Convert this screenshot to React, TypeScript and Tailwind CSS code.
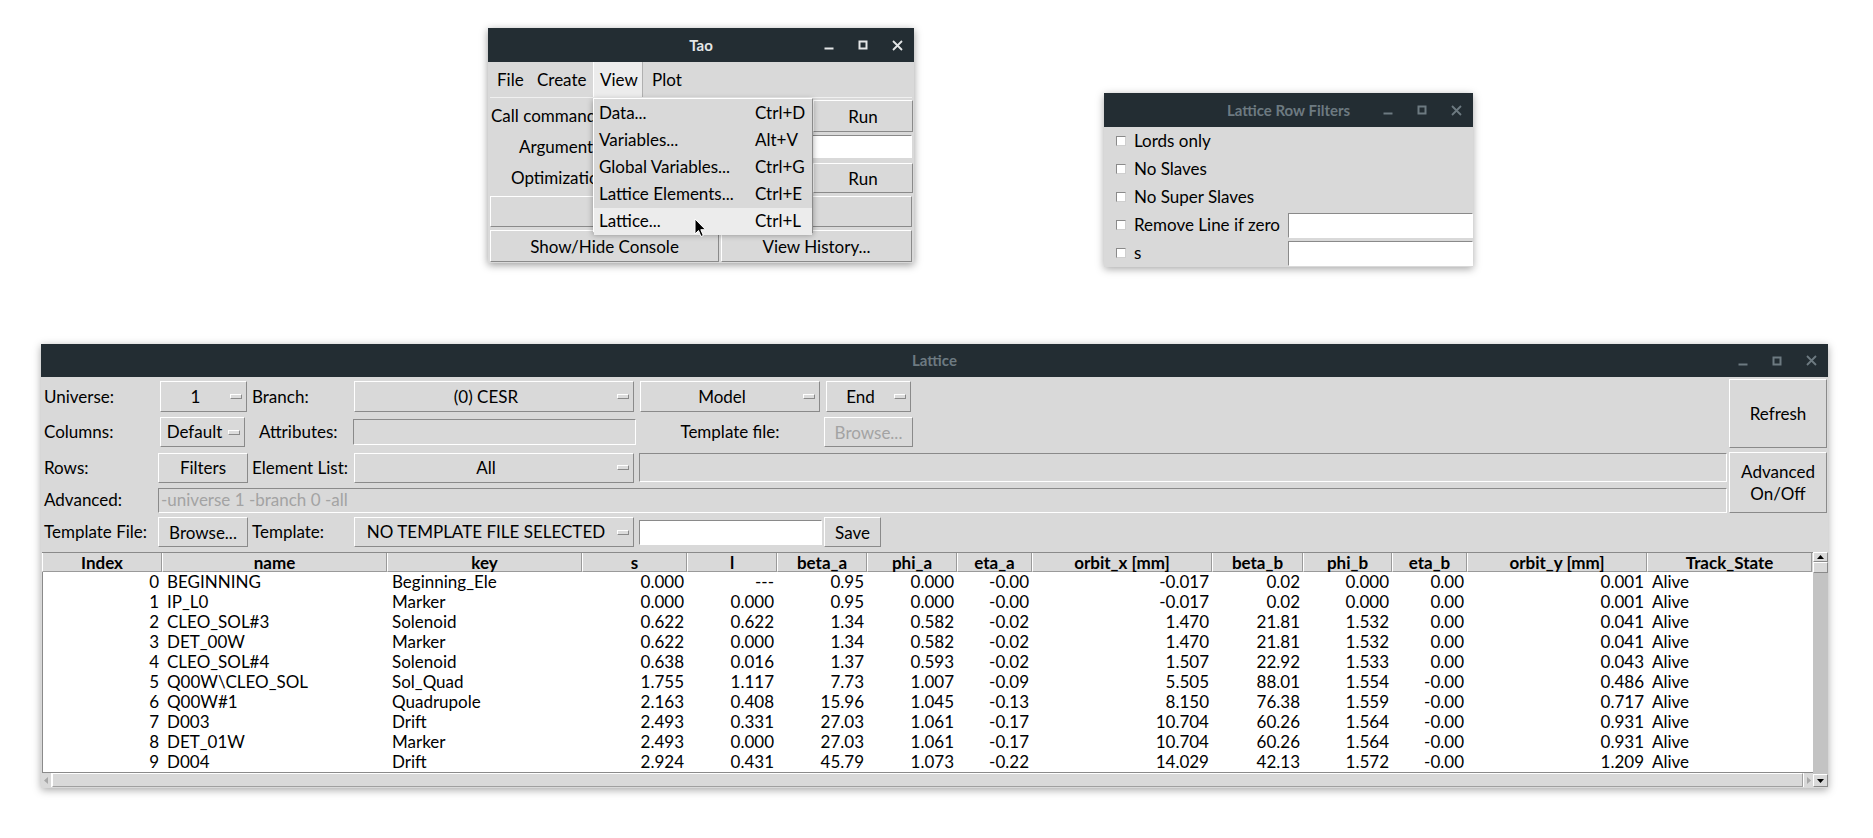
import React from "react";

const RAISED = "border border-t-white border-l-white border-b-[#8a8a8a] border-r-[#8a8a8a]";
const SUNKEN = "border border-t-[#8a8a8a] border-l-[#8a8a8a] border-b-white border-r-white";

function TitleBar({ title, active, tall }: { title: string; active?: boolean; tall?: boolean }) {
  const tone = active ? "text-[#e4e6e7]" : "text-[#6d7a81]";
  return (
    <div className={`relative flex shrink-0 items-center justify-center bg-[#232d33] ${tall ? "h-[34px]" : "h-[33px]"}`}>
      <span className={`text-[15px] font-bold ${tone}`}>{title}</span>
      <div className={`absolute right-0 top-0 flex h-full items-center ${tone}`}>
        <div className="flex w-[34px] justify-center">
          <svg width="10" height="10" viewBox="0 0 10 10">
            <rect x="0.5" y="7.5" width="9" height="2" fill="currentColor" />
          </svg>
        </div>
        <div className="flex w-[34px] justify-center">
          <svg width="10" height="10" viewBox="0 0 10 10">
            <rect x="1.5" y="1.5" width="7" height="7" fill="none" stroke="currentColor" strokeWidth="2" />
          </svg>
        </div>
        <div className="flex w-[34px] justify-center">
          <svg width="11" height="11" viewBox="0 0 11 11">
            <path d="M1 1 L10 10 M10 1 L1 10" stroke="currentColor" strokeWidth="1.8" />
          </svg>
        </div>
      </div>
    </div>
  );
}

function MenuButton({ label, className }: { label: string; className: string }) {
  return (
    <div className={`flex items-center bg-[#d9d9d9] ${RAISED} ${className}`}>
      <span className="flex-1 whitespace-nowrap text-center">{label}</span>
      <span className="mr-[4px] h-[5px] w-[12px] shrink-0 border border-t-white border-l-white border-b-[#8a8a8a] border-r-[#8a8a8a] bg-[#dcdcdc]" />
    </div>
  );
}

function Button({ label, className, disabled }: { label: React.ReactNode; className: string; disabled?: boolean }) {
  return (
    <div
      className={`flex items-center justify-center whitespace-nowrap bg-[#d9d9d9] text-center leading-[21px] ${RAISED} ${
        disabled ? "text-[#a3a3a3]" : "text-black"
      } ${className}`}
    >
      {label}
    </div>
  );
}

function Entry({ className, children }: { className: string; children?: React.ReactNode }) {
  return <div className={`flex items-center overflow-hidden whitespace-nowrap ${SUNKEN} ${className}`}>{children}</div>;
}

function TaoWindow() {
  const items = [
    ["Data...", "Ctrl+D"],
    ["Variables...", "Alt+V"],
    ["Global Variables...", "Ctrl+G"],
    ["Lattice Elements...", "Ctrl+E"],
    ["Lattice...", "Ctrl+L"],
  ];
  return (
    <div className="absolute left-[488px] top-[28px] flex h-[235px] w-[426px] flex-col shadow-[0_2px_8px_rgba(0,0,0,0.4)]">
      <TitleBar title="Tao" active tall />
      <div className="flex flex-1 flex-col bg-[#d9d9d9] px-[2px]">
        <div className="flex h-[36px] items-stretch border-b border-b-[#f0f0f0]">
          <div className="flex w-[40px] items-center pl-[7px]">File</div>
          <div className="flex w-[63px] items-center pl-[7px]">Create</div>
          <div className="flex w-[50px] items-center border-l border-r border-l-white border-r-[#b0b0b0] bg-[#ececec] pl-[6px]">View</div>
          <div className="flex items-center pl-[9px]">Plot</div>
        </div>
        <div className="mt-[2px] grid h-[32px] grid-cols-[323px_100px]">
          <div className="flex items-center whitespace-nowrap pl-[1px]">Call command:</div>
          <Button label="Run" className="h-full w-[100px]" />
        </div>
        <div className="mt-[3px] flex h-[23px]">
          <div className="flex w-[120px] items-center whitespace-nowrap pl-[29px]">Arguments:</div>
          <Entry className="flex-1 bg-white" />
        </div>
        <div className="mt-[5px] grid h-[30px] grid-cols-[323px_100px]">
          <div className="flex items-center whitespace-nowrap pl-[21px]">Optimization:</div>
          <Button label="Run" className="h-full w-[100px]" />
        </div>
        <Button label="Optimize" className="mt-[3px] h-[31px] w-full" />
        <div className="mt-[3px] flex h-[32px] gap-[2px]">
          <Button label="Show/Hide Console" className="h-full w-[229px]" />
          <Button label="View History..." className="h-full flex-1" />
        </div>
      </div>
      <div className="absolute left-[105px] top-[70px] flex h-[135px] w-[220px] flex-col border border-t-white border-l-white border-b-[#8a8a8a] border-r-[#8a8a8a] bg-[#d9d9d9] pt-[1px] shadow-[0_2px_6px_rgba(0,0,0,0.35)]">
        {items.map(([name, acc], i) => (
          <div
            key={name}
            className={`grid h-[27px] shrink-0 grid-cols-[156px_1fr] items-center pb-[3px] pl-[5px] ${
              i === 4 ? "bg-[#ececec]" : ""
            }`}
          >
            <span className="whitespace-nowrap">{name}</span>
            <span className="whitespace-nowrap">{acc}</span>
          </div>
        ))}
      </div>
    </div>
  );
}

function FiltersWindow() {
  const rows = ["Lords only", "No Slaves", "No Super Slaves", "Remove Line if zero", "s"];
  return (
    <div className="absolute left-[1104px] top-[93px] flex h-[174px] w-[369px] flex-col shadow-[0_2px_8px_rgba(0,0,0,0.35)]">
      <TitleBar title="Lattice Row Filters" tall />
      <div className="flex flex-1 flex-col bg-[#d9d9d9]">
        {rows.map((r, i) => (
          <div key={r} className="flex h-[28px] items-center">
            <div className="flex w-[184px] items-center pl-[12px]">
              <span className="h-[10px] w-[10px] shrink-0 border border-t-[#8a8a8a] border-l-[#8a8a8a] border-b-[#cfcfcf] border-r-[#cfcfcf] bg-white" />
              <span className="ml-[8px] whitespace-nowrap">{r}</span>
            </div>
            {i >= 3 && <Entry className="h-[25px] flex-1 bg-white" />}
          </div>
        ))}
      </div>
    </div>
  );
}

const COLS: { h: string; align: "l" | "r" }[] = [
  { h: "Index", align: "r" },
  { h: "name", align: "l" },
  { h: "key", align: "l" },
  { h: "s", align: "r" },
  { h: "l", align: "r" },
  { h: "beta_a", align: "r" },
  { h: "phi_a", align: "r" },
  { h: "eta_a", align: "r" },
  { h: "orbit_x [mm]", align: "r" },
  { h: "beta_b", align: "r" },
  { h: "phi_b", align: "r" },
  { h: "eta_b", align: "r" },
  { h: "orbit_y [mm]", align: "r" },
  { h: "Track_State", align: "l" },
];

const ROWS = [
  ["0", "BEGINNING", "Beginning_Ele", "0.000", "---", "0.95", "0.000", "-0.00", "-0.017", "0.02", "0.000", "0.00", "0.001", "Alive"],
  ["1", "IP_L0", "Marker", "0.000", "0.000", "0.95", "0.000", "-0.00", "-0.017", "0.02", "0.000", "0.00", "0.001", "Alive"],
  ["2", "CLEO_SOL#3", "Solenoid", "0.622", "0.622", "1.34", "0.582", "-0.02", "1.470", "21.81", "1.532", "0.00", "0.041", "Alive"],
  ["3", "DET_00W", "Marker", "0.622", "0.000", "1.34", "0.582", "-0.02", "1.470", "21.81", "1.532", "0.00", "0.041", "Alive"],
  ["4", "CLEO_SOL#4", "Solenoid", "0.638", "0.016", "1.37", "0.593", "-0.02", "1.507", "22.92", "1.533", "0.00", "0.043", "Alive"],
  ["5", "Q00W\\CLEO_SOL", "Sol_Quad", "1.755", "1.117", "7.73", "1.007", "-0.09", "5.505", "88.01", "1.554", "-0.00", "0.486", "Alive"],
  ["6", "Q00W#1", "Quadrupole", "2.163", "0.408", "15.96", "1.045", "-0.13", "8.150", "76.38", "1.559", "-0.00", "0.717", "Alive"],
  ["7", "D003", "Drift", "2.493", "0.331", "27.03", "1.061", "-0.17", "10.704", "60.26", "1.564", "-0.00", "0.931", "Alive"],
  ["8", "DET_01W", "Marker", "2.493", "0.000", "27.03", "1.061", "-0.17", "10.704", "60.26", "1.564", "-0.00", "0.931", "Alive"],
  ["9", "D004", "Drift", "2.924", "0.431", "45.79", "1.073", "-0.22", "14.029", "42.13", "1.572", "-0.00", "1.209", "Alive"],
];

const GRID = "grid grid-cols-[120px_225px_195px_105px_90px_90px_90px_75px_180px_91px_89px_75px_180px_165px]";

function LatticeTable() {
  return (
    <div className="mt-[3px] ml-[1px] flex h-[235px]">
      <div className="flex w-[1771px] flex-col">
        <div className={`${GRID} h-[20px] border-t border-t-[#8a8a8a]`}>
          {COLS.map((c) => (
            <div
              key={c.h}
              className="flex h-[19px] items-center justify-center whitespace-nowrap border-l border-r border-b border-l-white border-r-[#9a9a9a] border-b-[#9a9a9a] bg-[#d9d9d9] font-bold leading-[19px]"
            >
              {c.h}
            </div>
          ))}
        </div>
        <div className="h-[200px] border-l border-l-[#8a8a8a] bg-white">
          {ROWS.map((r) => (
            <div key={r[0]} className={`${GRID} h-[20px] leading-[20px]`}>
              {r.map((v, i) => (
                <div
                  key={i}
                  className={`whitespace-nowrap ${COLS[i].align === "r" ? "pr-[4px] text-right" : "pl-[4px] text-left"}`}
                >
                  {v}
                </div>
              ))}
            </div>
          ))}
        </div>
        <div className="flex h-[15px] border-t border-t-[#8a8a8a] bg-[#d9d9d9]">
          <div className="flex w-[10px] items-center justify-center border-r border-r-white">
            <svg width="5" height="7" viewBox="0 0 5 7">
              <path d="M4 0 L0 3.5 L4 7 Z" fill="#a8a8a8" />
            </svg>
          </div>
          <div className="flex-1 border border-t-white border-l-white border-b-[#a0a0a0] border-r-[#a0a0a0]" />
          <div className="flex w-[10px] items-center justify-center border-l border-l-white">
            <svg width="5" height="7" viewBox="0 0 5 7">
              <path d="M1 0 L5 3.5 L1 7 Z" fill="#a8a8a8" />
            </svg>
          </div>
        </div>
      </div>
      <div className="flex w-[15px] flex-col bg-[#c3c3c3]">
        <div className="flex h-[10px] items-center justify-center border border-t-white border-l-white border-b-[#8a8a8a] border-r-[#8a8a8a] bg-[#d9d9d9]">
          <svg width="7" height="4" viewBox="0 0 7 4">
            <path d="M0 4 L3.5 0 L7 4 Z" fill="#000" />
          </svg>
        </div>
        <div className="h-[11px] border border-t-white border-l-white border-b-[#8a8a8a] border-r-[#8a8a8a] bg-[#d9d9d9]" />
        <div className="flex-1" />
        <div className="flex h-[13px] items-center justify-center border border-t-white border-l-white border-b-[#8a8a8a] border-r-[#8a8a8a] bg-[#d9d9d9]">
          <svg width="7" height="4" viewBox="0 0 7 4">
            <path d="M0 0 L7 0 L3.5 4 Z" fill="#000" />
          </svg>
        </div>
      </div>
    </div>
  );
}

function LatticeWindow() {
  const label = "flex items-center whitespace-nowrap";
  return (
    <div className="absolute left-[41px] top-[344px] flex h-[444px] w-[1787px] flex-col shadow-[0_2px_8px_rgba(0,0,0,0.35)]">
      <TitleBar title="Lattice" />
      <div className="flex flex-1 flex-col bg-[#d9d9d9]">
        <div className="mt-[2px] grid grid-cols-[117px_92px_103px_284px_186px_91px_813px_101px] grid-rows-[35px_36px_35px_30px_34px]">
          <div className="col-start-8 row-span-2 row-start-1 flex">
            <Button label="Refresh" className="ml-[2px] h-[69px] w-[98px]" />
          </div>
          <div className="col-start-8 row-span-2 row-start-3 flex">
            <Button
              label={
                <span className="leading-[22px]">
                  Advanced
                  <br />
                  On/Off
                </span>
              }
              className="ml-[2px] mt-[2px] h-[61px] w-[98px]"
            />
          </div>

          <div className={`${label} pl-[3px]`}>Universe:</div>
          <div className="flex items-center"><MenuButton label="1" className="ml-[2px] h-[31px] w-[87px]" /></div>
          <div className={`${label} pl-[2px]`}>Branch:</div>
          <div className="flex items-center"><MenuButton label="(0) CESR" className="ml-[1px] h-[31px] w-[280px]" /></div>
          <div className="flex items-center"><MenuButton label="Model" className="ml-[3px] h-[31px] w-[180px]" /></div>
          <div className="flex items-center"><MenuButton label="End" className="ml-[3px] h-[31px] w-[85px]" /></div>
          <div />

          <div className={`${label} pl-[3px]`}>Columns:</div>
          <div className="flex items-center"><MenuButton label="Default" className="ml-[2px] h-[30px] w-[85px]" /></div>
          <div className={`${label} pl-[9px]`}>Attributes:</div>
          <div className="flex items-center"><Entry className="h-[26px] w-[283px] bg-[#d9d9d9]" /></div>
          <div className={`${label} justify-center`}>Template file:</div>
          <div className="flex items-center"><Button label="Browse..." disabled className="ml-[1px] h-[30px] w-[89px]" /></div>
          <div />

          <div className={`${label} pl-[3px]`}>Rows:</div>
          <div className="flex items-center"><Button label="Filters" className="h-[30px] w-[90px]" /></div>
          <div className={`${label} pl-[2px]`}>Element List:</div>
          <div className="flex items-center"><MenuButton label="All" className="ml-[1px] h-[30px] w-[280px]" /></div>
          <div className="col-span-3 flex items-center"><Entry className="ml-[2px] h-[29px] flex-1 bg-[#d9d9d9]" /></div>

          <div className={`${label} pl-[3px]`}>Advanced:</div>
          <div className="col-span-6 flex items-center">
            <Entry className="h-[25px] flex-1 bg-[#d9d9d9] pl-[2px] text-[#a3a3a3]">-universe 1 -branch 0 -all</Entry>
          </div>

          <div className={`${label} pl-[3px]`}>Template File:</div>
          <div className="flex items-center"><Button label="Browse..." className="h-[30px] w-[90px]" /></div>
          <div className={`${label} pl-[2px]`}>Template:</div>
          <div className="flex items-center"><MenuButton label="NO TEMPLATE FILE SELECTED" className="ml-[1px] h-[30px] w-[280px]" /></div>
          <div className="flex items-center"><Entry className="ml-[2px] h-[25px] w-[183px] bg-white" /></div>
          <div className="flex items-center"><Button label="Save" className="ml-[1px] h-[30px] w-[57px]" /></div>
        </div>
        <LatticeTable />
      </div>
    </div>
  );
}

export default function App() {
  return (
    <div className="relative h-[838px] w-[1873px] overflow-hidden bg-white font-['Lato','Open_Sans',sans-serif] text-[17px] text-black">
      <TaoWindow />
      <FiltersWindow />
      <LatticeWindow />
      <svg className="absolute left-[694px] top-[218px]" width="13" height="20" viewBox="0 0 13 20">
        <path d="M1 1 L1 16 L4.5 12.5 L7 18.5 L9.3 17.5 L6.8 11.7 L11.5 11.7 Z" fill="#000" stroke="#fff" strokeWidth="1" strokeLinejoin="round" />
      </svg>
    </div>
  );
}
